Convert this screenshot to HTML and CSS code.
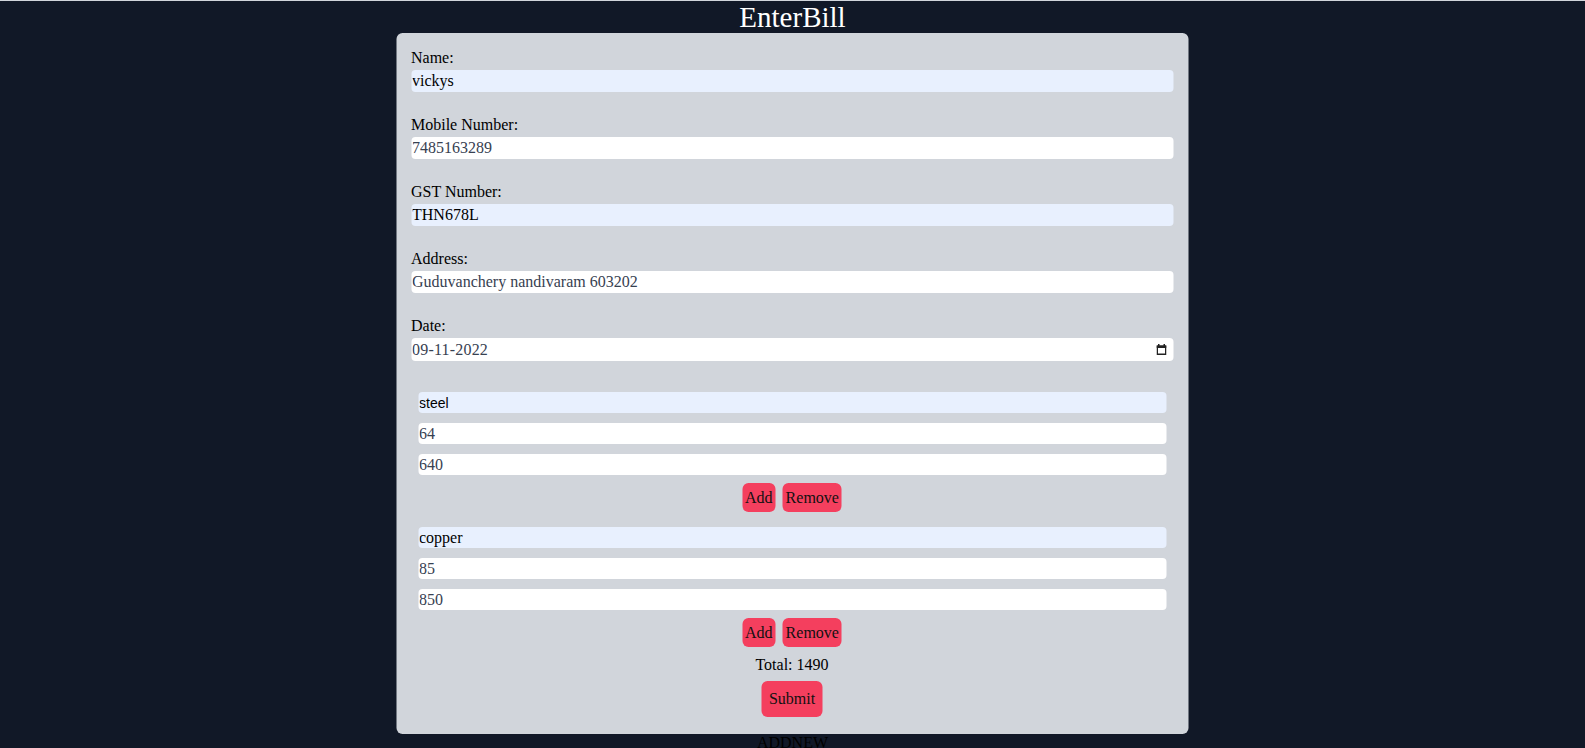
FILE: index.html
```html
<!DOCTYPE html>
<html lang="en">
<head>
<meta charset="utf-8">
<title>EnterBill</title>
<link rel="stylesheet" href="styles.css">
</head>
<body>
<h1 class="title">EnterBill</h1>
<main class="card">
  <form class="bill-form">
    <div class="field">
      <label class="field-label" for="name">Name:</label>
      <input class="field-input autofill" id="name" type="text" value="vickys">
    </div>
    <div class="field">
      <label class="field-label" for="mobile">Mobile Number:</label>
      <input class="field-input" id="mobile" type="text" value="7485163289">
    </div>
    <div class="field">
      <label class="field-label" for="gst">GST Number:</label>
      <input class="field-input autofill" id="gst" type="text" value="THN678L">
    </div>
    <div class="field">
      <label class="field-label" for="address">Address:</label>
      <input class="field-input" id="address" type="text" value="Guduvanchery nandivaram 603202">
    </div>
    <div class="field">
      <label class="field-label" for="date">Date:</label>
      <div class="date-wrap">
        <input class="field-input date-input" id="date" type="text" value="09-11-2022">
        <svg class="date-icon" width="10" height="11" viewBox="0 0 10 11" aria-hidden="true">
          <rect x="0.75" y="2.25" width="8.5" height="8" fill="none" stroke="#222" stroke-width="1.5"/>
          <rect x="0" y="1.5" width="10" height="2.5" fill="#222"/>
          <rect x="1.5" y="0" width="1.5" height="2" fill="#222"/>
          <rect x="7" y="0" width="1.5" height="2" fill="#222"/>
        </svg>
      </div>
    </div>

    <div class="items">
      <div class="item">
        <input class="item-input autofill sans" type="text" value="steel">
        <input class="item-input" type="text" value="64">
        <input class="item-input" type="text" value="640">
        <div class="actions">
          <button class="btn" type="button">Add</button>
          <button class="btn" type="button">Remove</button>
        </div>
      </div>
      <div class="item">
        <input class="item-input autofill" type="text" value="copper">
        <input class="item-input" type="text" value="85">
        <input class="item-input" type="text" value="850">
        <div class="actions">
          <button class="btn" type="button">Add</button>
          <button class="btn" type="button">Remove</button>
        </div>
      </div>
    </div>

    <p class="total">Total: 1490</p>
    <div class="submit-row">
      <button class="btn btn-submit" type="submit">Submit</button>
    </div>
  </form>
</main>
<p class="addnew">ADDNEW</p>
</body>
</html>
```

FILE: styles.css
```css
html, body {
  margin: 0;
  padding: 0;
}

body {
  background: #111827;
  border-top: 1px solid #d1d5db;
  font-family: "Liberation Serif", "Times New Roman", serif;
  font-size: 16px;
  color: #000;
  min-height: 747px;
}

.title {
  margin: 0;
  font-size: 29px;
  line-height: 32px;
  font-weight: normal;
  color: #fff;
  text-align: center;
}

.card {
  width: 762px;
  margin: 0 auto;
  padding: 16px 15px 17px;
  background: #d1d5db;
  border-radius: 6px;
  transform: translateX(-0.5px);
}

.bill-form {
  display: flex;
  flex-direction: column;
}

.field {
  display: flex;
  flex-direction: column;
  margin-bottom: 24px;
}

.field-label {
  line-height: 18px;
  margin-bottom: 3px;
}

.field-input,
.item-input {
  display: block;
  box-sizing: border-box;
  width: 100%;
  height: 22px;
  margin: 0;
  padding: 0 1px;
  border: none;
  border-radius: 4px;
  background: #fff;
  font-family: "Liberation Serif", "Times New Roman", serif;
  font-size: 16px;
  color: #374151;
  outline: none;
}

.autofill {
  background: #e8f0fe;
  color: #000;
}

.sans {
  font-family: "Liberation Sans", Arial, sans-serif;
  font-size: 14px;
}

.date-wrap {
  position: relative;
}

.date-input {
  height: 23px;
  letter-spacing: 0.2px;
}

.date-icon {
  position: absolute;
  right: 7px;
  top: 6px;
}

.items {
  display: flex;
  flex-direction: column;
  gap: 15px;
  padding: 0 7px;
  margin-top: 7px;
}

.item {
  display: flex;
  flex-direction: column;
  gap: 10px;
}

.item-input {
  height: 21px;
}

.actions {
  display: flex;
  justify-content: center;
  gap: 7px;
  margin-top: -2px;
}

.btn {
  height: 29px;
  margin: 0;
  padding: 0 3px;
  border: none;
  border-radius: 6px;
  background: #f43f5e;
  font-family: "Liberation Serif", "Times New Roman", serif;
  font-size: 16px;
  color: #111;
  cursor: pointer;
}

.total {
  margin: 9px 0 0;
  line-height: 18px;
  text-align: center;
}

.submit-row {
  display: flex;
  justify-content: center;
  margin-top: 7px;
}

.btn-submit {
  height: 36px;
  padding: 0 7px;
}

.addnew {
  margin: 0;
  line-height: 18px;
  text-align: center;
  color: #000;
}
```
